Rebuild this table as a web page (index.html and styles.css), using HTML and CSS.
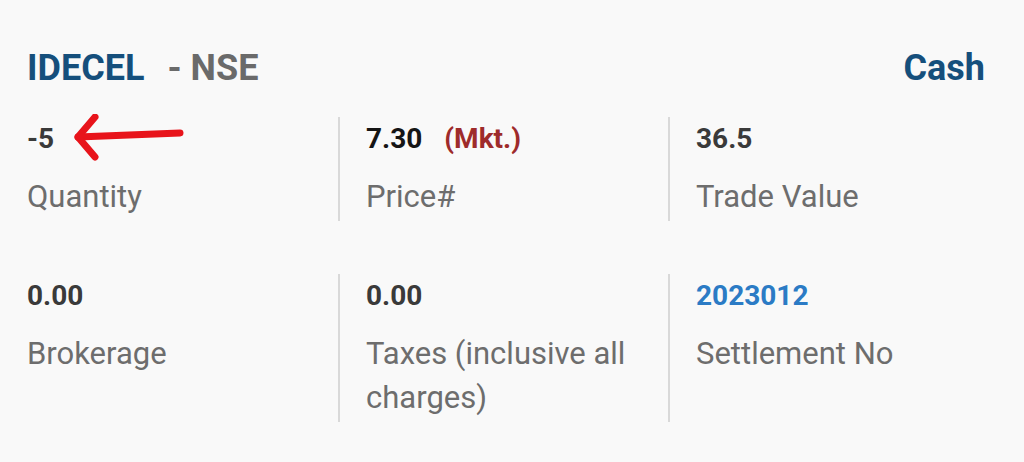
FILE: index.html
```html
<!DOCTYPE html>
<html>
<head>
<meta charset="utf-8">
<link rel="stylesheet" href="styles.css">
</head>
<body>
<div class="card">
  <div class="header">
    <div class="title"><span class="sym">IDECEL</span><span class="exch">- NSE</span></div>
    <div class="segment">Cash</div>
  </div>
  <div class="grid">
    <div class="cell first">
      <div class="value">-5</div>
      <div class="label">Quantity</div>
      <svg class="arrow" width="120" height="50" viewBox="0 0 120 50">
        <path d="M6 23 L108 19" stroke="#e8141b" stroke-width="7" stroke-linecap="round" fill="none"/>
        <path d="M23 3 L6 23 L23 43" stroke="#e8141b" stroke-width="7" stroke-linecap="round" stroke-linejoin="round" fill="none"/>
      </svg>
    </div>
    <div class="cell">
      <div class="value"><span class="dark">7.30</span><span class="mkt">(Mkt.)</span></div>
      <div class="label">Price#</div>
    </div>
    <div class="cell">
      <div class="value">36.5</div>
      <div class="label">Trade Value</div>
    </div>
    <div class="cell first">
      <div class="value">0.00</div>
      <div class="label">Brokerage</div>
    </div>
    <div class="cell">
      <div class="value">0.00</div>
      <div class="label">Taxes (inclusive all charges)</div>
    </div>
    <div class="cell">
      <div class="value blue">2023012</div>
      <div class="label">Settlement No</div>
    </div>
  </div>
</div>
</body>
</html>
```
FILE: styles.css
```css
html, body {
  margin: 0;
  padding: 0;
  background: #f9f9f9;
  font-family: Roboto, "Liberation Sans", Arial, sans-serif;
}
.card {
  width: 1024px;
  height: 462px;
  box-sizing: border-box;
  padding: 48px 39px 0 27px;
  background: #f9f9f9;
}
.header {
  display: flex;
  justify-content: space-between;
  align-items: baseline;
  height: 40px;
  line-height: 40px;
  font-size: 36px;
  font-weight: 700;
}
.sym { color: #154f7c; }
.exch { color: #6a6a6a; margin-left: 23px; }
.segment { color: #154f7c; }
.grid {
  display: grid;
  grid-template-columns: 311px 330px 1fr;
  row-gap: 53px;
  margin-top: 29px;
}
.cell {
  position: relative;
  border-left: 2px solid #d9d9d9;
  padding: 6px 0 2px 26px;
}
.cell.first {
  border-left: none;
  padding-left: 0;
}
.value {
  font-size: 28px;
  font-weight: 700;
  line-height: 32px;
  color: #3a3a3a;
}
.dark { color: #151515; }
.mkt { color: #9e2b2b; margin-left: 22px; }
.blue { color: #2b7bc5; }
.label {
  margin-top: 20px;
  font-size: 31px;
  line-height: 44px;
  color: #6d6d6d;
  max-width: 290px;
}
.arrow {
  position: absolute;
  left: 45px;
  top: -3px;
}
```
